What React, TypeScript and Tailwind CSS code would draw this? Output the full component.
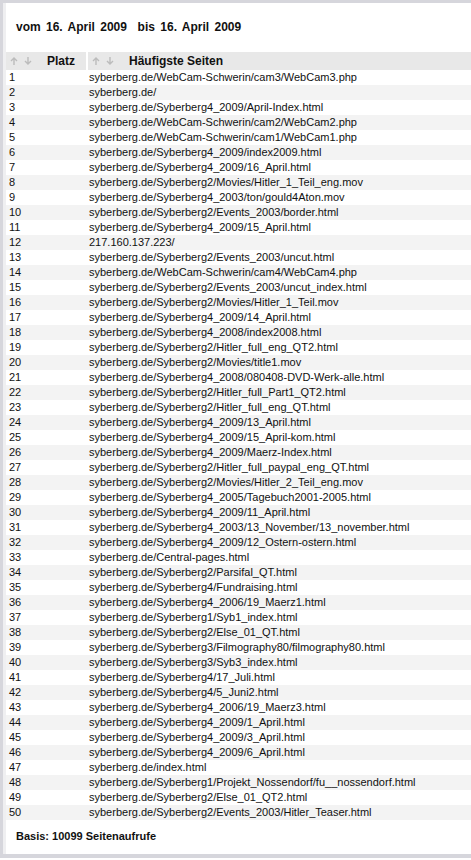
import React from 'react';

const pages = [
  'syberberg.de/WebCam-Schwerin/cam3/WebCam3.php',
  'syberberg.de/',
  'syberberg.de/Syberberg4_2009/April-Index.html',
  'syberberg.de/WebCam-Schwerin/cam2/WebCam2.php',
  'syberberg.de/WebCam-Schwerin/cam1/WebCam1.php',
  'syberberg.de/Syberberg4_2009/index2009.html',
  'syberberg.de/Syberberg4_2009/16_April.html',
  'syberberg.de/Syberberg2/Movies/Hitler_1_Teil_eng.mov',
  'syberberg.de/Syberberg4_2003/ton/gould4Aton.mov',
  'syberberg.de/Syberberg2/Events_2003/border.html',
  'syberberg.de/Syberberg4_2009/15_April.html',
  '217.160.137.223/',
  'syberberg.de/Syberberg2/Events_2003/uncut.html',
  'syberberg.de/WebCam-Schwerin/cam4/WebCam4.php',
  'syberberg.de/Syberberg2/Events_2003/uncut_index.html',
  'syberberg.de/Syberberg2/Movies/Hitler_1_Teil.mov',
  'syberberg.de/Syberberg4_2009/14_April.html',
  'syberberg.de/Syberberg4_2008/index2008.html',
  'syberberg.de/Syberberg2/Hitler_full_eng_QT2.html',
  'syberberg.de/Syberberg2/Movies/title1.mov',
  'syberberg.de/Syberberg4_2008/080408-DVD-Werk-alle.html',
  'syberberg.de/Syberberg2/Hitler_full_Part1_QT2.html',
  'syberberg.de/Syberberg2/Hitler_full_eng_QT.html',
  'syberberg.de/Syberberg4_2009/13_April.html',
  'syberberg.de/Syberberg4_2009/15_April-kom.html',
  'syberberg.de/Syberberg4_2009/Maerz-Index.html',
  'syberberg.de/Syberberg2/Hitler_full_paypal_eng_QT.html',
  'syberberg.de/Syberberg2/Movies/Hitler_2_Teil_eng.mov',
  'syberberg.de/Syberberg4_2005/Tagebuch2001-2005.html',
  'syberberg.de/Syberberg4_2009/11_April.html',
  'syberberg.de/Syberberg4_2003/13_November/13_november.html',
  'syberberg.de/Syberberg4_2009/12_Ostern-ostern.html',
  'syberberg.de/Central-pages.html',
  'syberberg.de/Syberberg2/Parsifal_QT.html',
  'syberberg.de/Syberberg4/Fundraising.html',
  'syberberg.de/Syberberg4_2006/19_Maerz1.html',
  'syberberg.de/Syberberg1/Syb1_index.html',
  'syberberg.de/Syberberg2/Else_01_QT.html',
  'syberberg.de/Syberberg3/Filmography80/filmography80.html',
  'syberberg.de/Syberberg3/Syb3_index.html',
  'syberberg.de/Syberberg4/17_Juli.html',
  'syberberg.de/Syberberg4/5_Juni2.html',
  'syberberg.de/Syberberg4_2006/19_Maerz3.html',
  'syberberg.de/Syberberg4_2009/1_April.html',
  'syberberg.de/Syberberg4_2009/3_April.html',
  'syberberg.de/Syberberg4_2009/6_April.html',
  'syberberg.de/index.html',
  'syberberg.de/Syberberg1/Projekt_Nossendorf/fu__nossendorf.html',
  'syberberg.de/Syberberg2/Else_01_QT2.html',
  'syberberg.de/Syberberg2/Events_2003/Hitler_Teaser.html',
];

function SortArrows() {
  return (
    <span className="flex items-center gap-[4px] text-[#bcbcbc]">
      <svg width="10" height="10" viewBox="0 0 10 10" fill="none" stroke="currentColor" strokeWidth="1.4">
        <path d="M5 9V2M2 5l3-3 3 3" />
      </svg>
      <svg width="10" height="10" viewBox="0 0 10 10" fill="none" stroke="currentColor" strokeWidth="1.4">
        <path d="M5 1v7M2 5l3 3 3-3" />
      </svg>
    </span>
  );
}

export default function App() {
  return (
    <div className="w-[471px] h-[860px] bg-white font-['Liberation_Sans',Arial,sans-serif] text-[#111] flex flex-col">
      <div className="flex-1 flex flex-col border-l-[3px] border-t-[3px] border-[#d6d6dc]">
        <div className="flex-1 flex flex-col border-l-[3px] border-[#efeff1]">
          {/* TITLE */}
          <div className="h-[49px] pl-[10px] pt-[15px] text-[12px] font-bold [word-spacing:2px]">
            vom 16. April 2009 &nbsp;bis 16. April 2009
          </div>

          {/* TABLE */}
          <div className="text-[11px] leading-[15px]">
            <div className="flex h-[18px] bg-[#e8e8e8] font-bold text-[12px] items-center">
              <div className="w-[80px] flex items-center gap-[14px] pl-[3px] h-full">
                <SortArrows />
                <span>Platz</span>
              </div>
              <div className="w-[2px] h-full bg-white"></div>
              <div className="flex-1 flex items-center gap-[14px] pl-[3px] h-full">
                <SortArrows />
                <span>Häufigste Seiten</span>
              </div>
            </div>
            {pages.map((p, i) => (
              <div key={i} className={`flex h-[15px] ${i % 2 === 1 ? 'bg-[#f3f3f3]' : 'bg-white'}`}>
                <div className="w-[82px] pl-[3px]">{i + 1}</div>
                <div className="flex-1 pl-[1px] whitespace-nowrap">{p}</div>
              </div>
            ))}
          </div>

          {/* FOOTER */}
          <div className="pl-[10px] pt-[8px] text-[11px] font-bold">Basis: 10099 Seitenaufrufe</div>
          <div className="flex-1"></div>
        </div>
      </div>
      <div className="h-[4px] bg-[#d6d6dc]"></div>
      <div className="h-[2px] bg-white"></div>
    </div>
  );
}
